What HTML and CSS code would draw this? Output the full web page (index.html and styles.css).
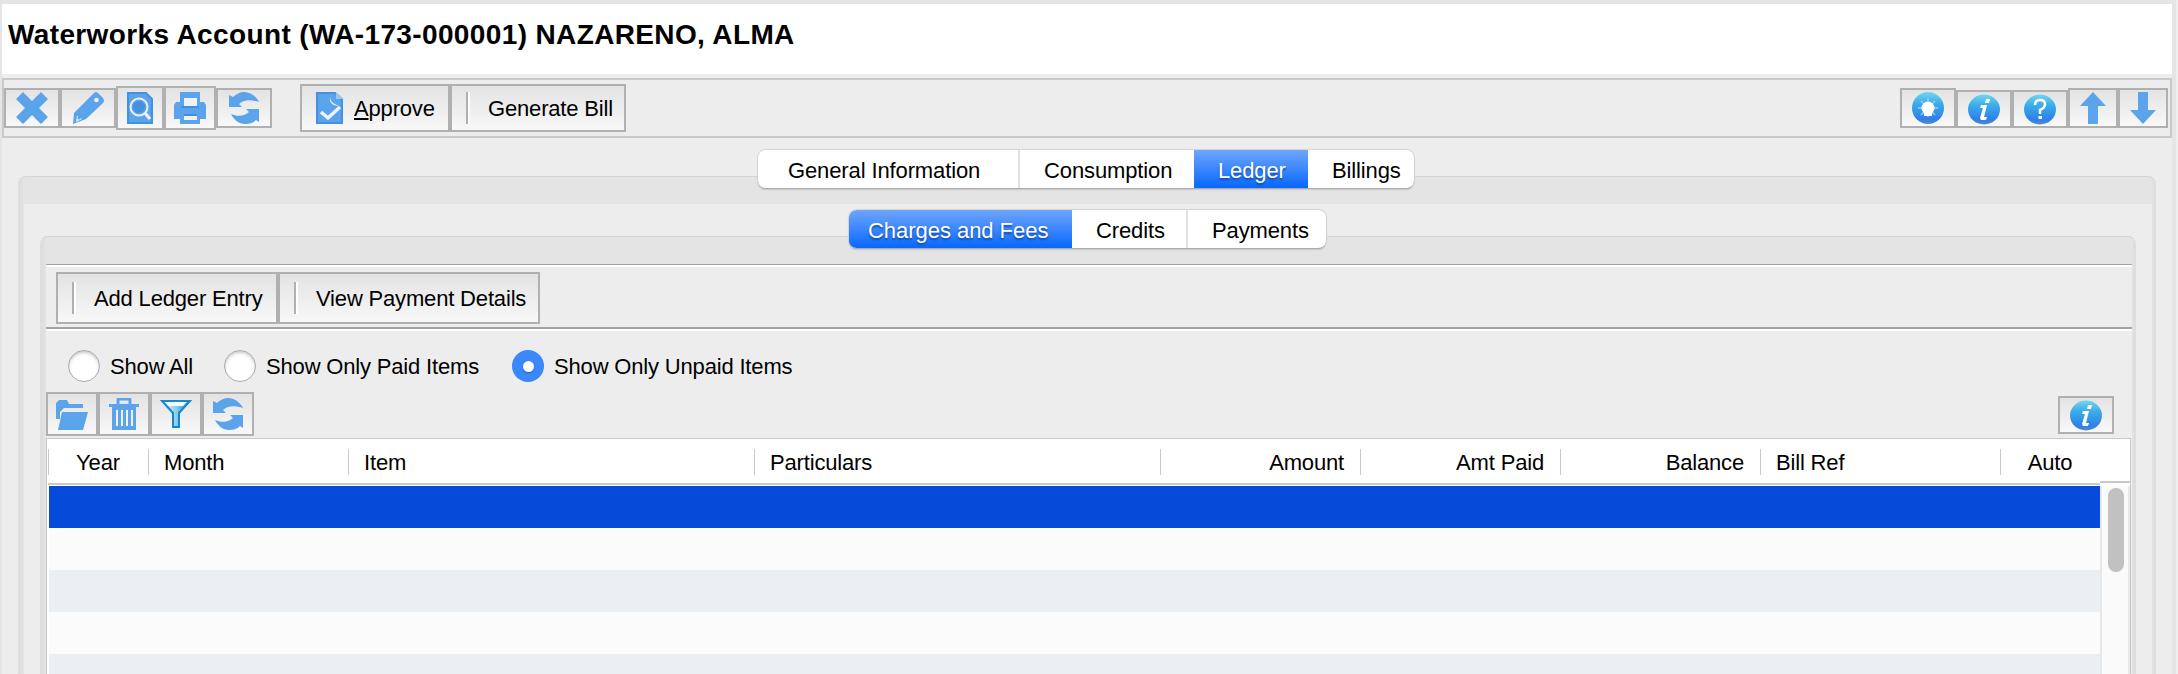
FILE: index.html
```html
<!DOCTYPE html>
<html lang="en">
<head>
<meta charset="utf-8">
<title>Waterworks Account</title>
<link rel="stylesheet" href="styles.css">
</head>
<body>
<svg class="defs" aria-hidden="true">
  <defs>
    <linearGradient id="orb" x1="0" y1="0" x2="0" y2="1"><stop offset="0" stop-color="#74d6ee"/><stop offset=".35" stop-color="#3dade9"/><stop offset=".85" stop-color="#2e7fe8"/><stop offset="1" stop-color="#5c8ac4"/></linearGradient>
    <linearGradient id="funnel" x1="0" y1="0" x2="1" y2="0"><stop offset="0" stop-color="#eafaff"/><stop offset=".5" stop-color="#8ed0f0"/><stop offset="1" stop-color="#1173bd"/></linearGradient>
    <symbol id="refresh" viewBox="0 0 30 32"><path fill="#5ba3ea" d="M0 3l4 2c3-3 7-5 11-5 6 0 12 4 15 10-9-3-16-2-20 2l3 3H0zM30 17v13l-3-2c-3 3-7 4-11 4C10 32 5 28 2 22c7 3 14 2 18-2l-3-3z"/></symbol>
    <symbol id="info" viewBox="0 0 32 32"><ellipse cx="16" cy="16.500" rx="16" ry="15" fill="url(#orb)"/><path d="M18 6h4l-1 4h-4zM13 12h6l-3 12h3l-1 3h-5l-1-2 3-10h-3z" fill="#fff"/></symbol>
  </defs>
</svg>
<div class="window">
  <header class="title"><h1>Waterworks Account (WA-173-000001) NAZARENO, ALMA</h1></header>
  <div class="toolbar">
    <button class="btn w56 h40"><svg width="32" height="32" viewBox="0 0 32 32"><path d="M7 0l9 9 9-9 7 7-9 9 9 9-7 7-9-9-9 9-7-7 9-9-9-9z" fill="#5ba3ea"/></svg></button>
    <button class="btn w56 h40"><svg width="32" height="32" viewBox="0 0 32 32"><path d="M22 1q2-2 4 0l5 5q2 3 0 5L14 27 1 32l1-11z" fill="#5ba3ea"/><circle cx="24.500" cy="8" r="2.300" fill="#eee"/><path d="M5 24l5 3-6 3z" fill="#eee"/><circle cx="7" cy="26" r="1.500" fill="#5ba3ea"/></svg></button>
    <button class="btn w48 h44"><svg width="26" height="32" viewBox="0 0 26 32"><path d="M1 1h18l6 6v24H1z" fill="#5ba3ea" stroke="#4491e2" stroke-width="2"/><circle cx="12" cy="15" r="8.500" fill="#5ba3ea" stroke="#eee" stroke-width="2"/><circle cx="12" cy="15" r="6" fill="#4491e2"/><path d="M18 21l5 6" stroke="#eee" stroke-width="3.500"/></svg></button>
    <button class="btn w52 h44"><svg width="32" height="32" viewBox="0 0 32 32"><path d="M6 0h20v10h4l2 3v14h-6v5H6v-5H0V13l2-3h4z" fill="#5ba3ea"/><path d="M10 6h13v8H10zM10 24h13v4H10z" fill="#f1f1f1"/><path d="M7 15h18M10 23h13" stroke="#3f8fe2" stroke-width="2"/></svg></button>
    <button class="btn w56 h40"><svg width="30" height="32"><use href="#refresh"/></svg></button>
    <button class="btn text approve"><svg width="28" height="32" viewBox="0 0 28 32"><path d="M1 1h18l7 7v23H1z" fill="#5ba3ea" stroke="#4491e2" stroke-width="2"/><path d="M20 0v7h8z" fill="#9bc5ee"/><path d="M14 5c1 6 5 7 9 9-6 0-10-3-9-9z" fill="#dceafa"/><path d="M5 20l7 6 12-11" fill="none" stroke="#eef4fb" stroke-width="3.500"/></svg><span><u>A</u>pprove</span></button>
    <button class="btn text generate"><i class="bar"></i><span>Generate Bill</span></button>
    <div class="right">
      <button class="btn w56 h40"><svg width="32" height="32" viewBox="0 0 32 32"><circle cx="16" cy="16" r="16" fill="url(#orb)"/><path d="M16 6v19M6 16h20M9 9l14 14M23 9L9 23" stroke="#8fcdf4" stroke-width="1.500"/><circle cx="16" cy="16" r="6.500" fill="#fff"/><path d="M12 20h8v4h-8z" fill="#fff"/></svg></button>
      <button class="btn w56 h38"><svg width="32" height="32"><use href="#info"/></svg></button>
      <button class="btn w56 h38"><svg width="32" height="32" viewBox="0 0 32 32"><ellipse cx="16" cy="16.500" rx="16" ry="15" fill="url(#orb)"/><path d="M11 12q0-5 5-5t5 4-5 6v4" fill="none" stroke="#fff" stroke-width="2.500"/><path d="M14.500 23h3.500v3h-3.500z" fill="#fff"/></svg></button>
      <button class="btn w50 h40"><svg width="26" height="32" viewBox="0 0 26 32"><path d="M13 0l13 14h-8v18H8V14H0z" fill="#5ba3ea"/></svg></button>
      <button class="btn w50 h40"><svg width="26" height="32" viewBox="0 0 26 32"><path d="M13 32L0 18h8V0h10v18h8z" fill="#5ba3ea"/></svg></button>
    </div>
  </div>
  <div class="tabs main-tabs">
    <span class="tab general">General Information</span><span class="tab consumption">Consumption</span><span class="tab ledger active">Ledger</span><span class="tab billings">Billings</span>
  </div>
  <div class="pane outer">
    <div class="content">
      <div class="tabs sub-tabs">
        <span class="tab charges active">Charges and Fees</span><span class="tab credits">Credits</span><span class="tab payments">Payments</span>
      </div>
      <div class="pane inner">
        <div class="content">
          <div class="ledger-bar">
            <button class="btn text add"><i class="bar"></i><span>Add Ledger Entry</span></button>
            <button class="btn text view"><i class="bar"></i><span>View Payment Details</span></button>
          </div>
          <div class="radios">
            <label class="r1"><i class="radio"></i><span>Show All</span></label>
            <label class="r2"><i class="radio"></i><span>Show Only Paid Items</span></label>
            <label class="r3"><i class="radio on"></i><span>Show Only Unpaid Items</span></label>
          </div>
          <div class="list-bar">
            <button class="btn w52 h44"><svg width="32" height="32" viewBox="0 0 32 32"><path d="M0 5l3-3h8l2 4h14v4H8l-4 4v7H0zM6 14h26l-5 18H2z" fill="#5ba3ea"/></svg></button>
            <button class="btn w52 h44"><svg width="30" height="32" viewBox="0 0 30 32"><path d="M9 6V2q0-1 1-1h10q1 0 1 1v4M0 7.500h30" fill="none" stroke="#5ba3ea" stroke-width="3"/><path d="M3 8h24v24H3z" fill="#5ba3ea"/><path d="M8 12v16M13 12v16M18 12v16M23 12v16" stroke="#f1f1f1" stroke-width="2"/></svg></button>
            <button class="btn w52 h44"><svg width="32" height="32" viewBox="0 0 32 32"><path d="M2 3h28L19 15v14h-6V15z" fill="url(#funnel)" stroke="#1687cf" stroke-width="2"/><path d="M5 4h22l-4 4H9z" fill="#eefaff"/></svg></button>
            <button class="btn w52 h44"><svg width="30" height="32"><use href="#refresh"/></svg></button>
            <button class="btn w56 h38 list-info"><svg width="32" height="32"><use href="#info"/></svg></button>
          </div>
          <div class="table">
            <div class="grid">
              <div class="head">
                <span class="center">Year</span><span>Month</span><span>Item</span><span>Particulars</span><span class="num">Amount</span><span class="num">Amt Paid</span><span class="num">Balance</span><span>Bill Ref</span><span class="center">Auto</span>
              </div>
              <div class="row selected"></div><div class="row"></div><div class="row alt"></div><div class="row"></div><div class="row alt"></div>
            </div>
            <div class="scroll"><div class="corner"></div><div class="track"><div class="thumb"></div></div></div>
          </div>
        </div>
      </div>
    </div>
  </div>
</div>
</body>
</html>
```
FILE: styles.css
```css
* { box-sizing: border-box; }
body { margin: 0; background: #efefef; overflow: hidden; color: #000; font: 22px/26px "Liberation Sans", Arial, sans-serif; letter-spacing: -.17px; }
.defs { position: absolute; width: 0; height: 0; }
.window { width: 2176px; height: 674px; overflow: hidden; background: #ededed; border: solid #e5e5e5; border-width: 4px 4px 0 2px; display: flex; flex-direction: column; }
.title { height: 70px; flex: none; background: #fff; padding: 14px 0 0 6px; }
h1 { margin: 0; font-size: 28px; line-height: 34px; letter-spacing: .37px; white-space: nowrap; }
.toolbar { height: 60px; flex: none; margin-top: 4px; border: 2px solid #c9c9c9; display: flex; align-items: center; }
.right { margin-left: auto; margin-right: 2px; display: flex; align-items: flex-end; }
.btn { font: inherit; letter-spacing: inherit; color: inherit; border: 2px solid #b0b0b0; background: linear-gradient(#e3e3e3, #f8f8f8); padding: 0; margin: 0; display: flex; align-items: center; justify-content: center; flex: none; white-space: nowrap; }
.w48 { width: 48px; } .w50 { width: 50px; } .w52 { width: 52px; } .w56 { width: 56px; }
.h38 { height: 38px; } .h40 { height: 40px; } .h44 { height: 44px; }
.text { height: 48px; justify-content: flex-start; padding-left: 14px; }
.text span, .radios span { padding-top: 2px; }
u { text-underline-offset: 2px; text-decoration-thickness: 2px; }
.approve { width: 150px; margin-left: 28px; gap: 10px; }
.generate { width: 176px; }
.bar { width: 4px; height: 32px; border-left: 2px solid #b0b0b0; background: #fff; margin-right: 18px; }

.tabs { position: relative; z-index: 1; flex: none; height: 39px; display: flex; border-radius: 8px; background: #fff; border-bottom: 1px solid #aaa; box-shadow: 0 0 1px 1px #d2d2d2, 0 1px 1px #aaa; overflow: hidden; letter-spacing: -.12px; }
.tab { height: 39px; padding-top: 8px; flex: none; white-space: nowrap; }
.main-tabs { width: 656px; margin: 12px 0 0 756px; }
.general { width: 262px; padding-left: 30px; border-right: 2px solid #e1e1e1; }
.consumption { width: 174px; padding-left: 24px; }
.ledger { width: 114px; padding-left: 24px; }
.billings { padding-left: 24px; }
.active { color: #fff; background: linear-gradient(#6fa6fb, #0566ff); text-shadow: 0 2px 2px #174b9c; }
.sub-tabs { width: 477px; margin: 6px 0 0 825px; }
.charges { width: 223px; padding-left: 19px; letter-spacing: -.04px; }
.credits { width: 116px; padding-left: 24px; border-right: 2px solid #e1e1e1; }
.payments { padding-left: 24px; }
.pane { background: linear-gradient(90deg, #dcdcdc, #e4e4e4 5px, #e4e4e4 calc(100% - 3px), #dcdcdc); border: 1px solid #d5d5d5; border-color: #d5d5d5 #dedede; border-bottom: 0; border-radius: 8px 8px 0 0; }
.outer { margin: -13px 16px 0 16px; height: 520px; padding: 27px 3px 0 5px; }
.outer > .content { background: #ededed; height: 500px; overflow: hidden; }
.inner { margin: -13px 16px 0; height: 500px; padding: 27px 3px 0 5px; }
.inner > .content { background: #ededed; height: 470px; }
.ledger-bar { height: 67px; border-top: 1px solid #a2a2a2; border-bottom: 2px solid #fff; padding: 7px 0 0 10px; display: flex; box-shadow: inset 0 2px #fff, inset 0 -2px #a2a2a2; }
.ledger-bar .btn { height: 52px; }
.add { width: 222px; } .view { width: 262px; }
.radios { height: 61px; padding: 19px 0 0 22px; display: flex; }
.radios label { display: flex; height: 32px; align-items: center; gap: 10px; white-space: nowrap; }
.r1 { width: 156px; } .r2 { width: 288px; }
.radio { width: 32px; height: 32px; border-radius: 50%; background: #fff; border: 1px solid #aaa; box-shadow: inset 0 2px 3px #ccc; flex: none; }
.radio.on { border: 0; background: #3b88fd; box-shadow: none; display: grid; place-items: center; }
.radio.on::after { content: ""; width: 11px; height: 11px; border-radius: 50%; background: #fff; box-shadow: 0 1px 2px #1e5fbd; }
.list-bar { height: 46px; display: flex; align-items: flex-start; }
.list-info { margin: 4px 18px 0 auto; }
.table { width: 2085px; height: 240px; border: 1px solid #c9c9c9; border-bottom: 0; background: #fff; display: flex; padding: 1px 0 0 1px; }
.grid { width: 2052px; }
.head { display: grid; grid-template-columns: 100px 200px 406px 406px 200px 200px 200px 240px 100px; height: 45px; border-bottom: 2px solid #c9c9c9; align-items: center; }
.head span { height: 26px; line-height: 28px; border-left: 1px solid #c9c9c9; padding: 0 16px 0 15px; margin-top: 1px; white-space: nowrap; }
.head .center { text-align: center; }
.head .num { text-align: right; }
.row { height: 42px; margin-left: 1px; background: #fbfbfb; }
.row.selected { margin-top: 1px; background: #064ad9; }
.row.alt { background: #eaeff3; }
.scroll { width: 30px; }
.corner { height: 43px; border-bottom: 2px solid #c9c9c9; }
.track { margin-top: 3px; height: 200px; background: #fafafa; border: solid #e8e8e8; border-width: 0 2px; padding: 2px 0 0 6px; }
.thumb { width: 16px; height: 84px; border-radius: 8px; background: #c1c1c1; }
```
